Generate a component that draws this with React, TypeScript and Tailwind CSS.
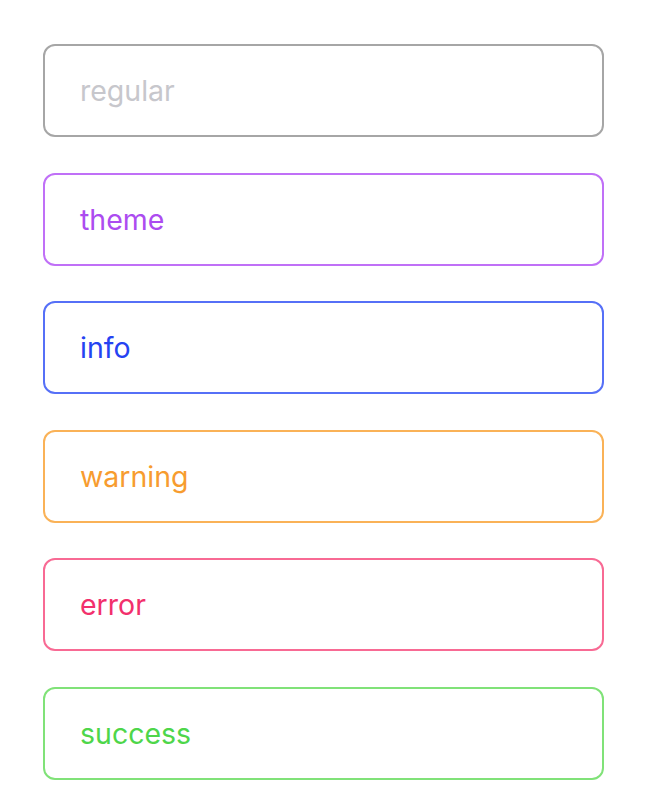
const fields = [
  { label: "regular", box: "border-[#a6a6a6]", text: "text-[#c7c7cc]" },
  { label: "theme", box: "border-[#c070f7]", text: "text-[#ac4cf0]" },
  { label: "info", box: "border-[#5670f7]", text: "text-[#2543f2]" },
  { label: "warning", box: "border-[#fab257]", text: "text-[#f79c2f]" },
  { label: "error", box: "border-[#f86a94]", text: "text-[#f2306c]" },
  { label: "success", box: "border-[#80e278]", text: "text-[#4ed64a]" },
];

export default function App() {
  return (
    <div className="min-h-[806px] w-[648px] bg-white pt-[44px] pl-[43px] font-['Inter','Noto_Sans',sans-serif]">
      <div className="flex w-[561px] flex-col gap-[35.5px]">
        {fields.map((f) => (
          <div
            key={f.label}
            className={`flex h-[93px] items-center rounded-[12px] border-2 pl-[35px] pt-[2px] ${f.box}`}
          >
            <span className={`text-[28.5px] leading-none ${f.text}`}>{f.label}</span>
          </div>
        ))}
      </div>
    </div>
  );
}
